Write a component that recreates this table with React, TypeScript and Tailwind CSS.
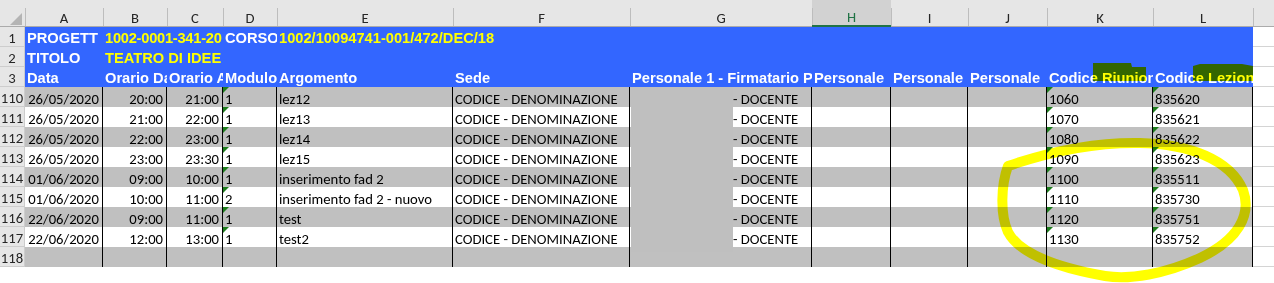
import type { ReactNode } from 'react'

const COLS = ['A', 'B', 'C', 'D', 'E', 'F', 'G', 'H', 'I', 'J', 'K', 'L'] as const
type Col = (typeof COLS)[number]

const W: Record<Col, string> = {
  A: 'w-[78px]',
  B: 'w-[64px]',
  C: 'w-[56px]',
  D: 'w-[54px]',
  E: 'w-[176px]',
  F: 'w-[177px]',
  G: 'w-[182px]',
  H: 'w-[79px]',
  I: 'w-[77px]',
  J: 'w-[79px]',
  K: 'w-[106px]',
  L: 'w-[100px]',
}

interface Riga {
  n: number
  data: string
  dalle: string
  alle: string
  modulo: string
  argomento: string
  riunione: string
  lezione: string
}

const RIGHE: Riga[] = [
  { n: 110, data: '26/05/2020', dalle: '20:00', alle: '21:00', modulo: '1', argomento: 'lez12', riunione: '1060', lezione: '835620' },
  { n: 111, data: '26/05/2020', dalle: '21:00', alle: '22:00', modulo: '1', argomento: 'lez13', riunione: '1070', lezione: '835621' },
  { n: 112, data: '26/05/2020', dalle: '22:00', alle: '23:00', modulo: '1', argomento: 'lez14', riunione: '1080', lezione: '835622' },
  { n: 113, data: '26/05/2020', dalle: '23:00', alle: '23:30', modulo: '1', argomento: 'lez15', riunione: '1090', lezione: '835623' },
  { n: 114, data: '01/06/2020', dalle: '09:00', alle: '10:00', modulo: '1', argomento: 'inserimento fad 2', riunione: '1100', lezione: '835511' },
  { n: 115, data: '01/06/2020', dalle: '10:00', alle: '11:00', modulo: '2', argomento: 'inserimento fad 2 - nuovo', riunione: '1110', lezione: '835730' },
  { n: 116, data: '22/06/2020', dalle: '09:00', alle: '11:00', modulo: '1', argomento: 'test', riunione: '1120', lezione: '835751' },
  { n: 117, data: '22/06/2020', dalle: '12:00', alle: '13:00', modulo: '1', argomento: 'test2', riunione: '1130', lezione: '835752' },
]

function RowHead({ n }: { n: number }) {
  return (
    <div className="w-[25px] shrink-0 flex items-end justify-center bg-[#e6e6e6] border-b border-r border-[#cdcdcd] leading-[15px] text-[#262626]">
      {n}
    </div>
  )
}

function ColumnHeader() {
  return (
    <div className="flex h-[27px] bg-[#e6e6e6] font-['Carlito','Calibri','Lato',sans-serif] text-[14.67px]">
      <div className="relative w-[25px] shrink-0 border-b border-[#ababab]">
        <svg className="absolute left-0 top-0" width="25" height="26">
          <polygon points="22,13 22,25 10,25" fill="#b4b4b4" />
        </svg>
      </div>
      {COLS.map((c) => (
        <div
          key={c}
          className={`${W[c]} shrink-0 relative flex items-end justify-center leading-[15px] before:absolute before:left-0 before:top-[8px] before:bottom-0 before:w-px before:bg-[#bdbdbd] ${
            c === 'H' ? 'bg-[#d2d2d2] text-[#217346] border-b-2 border-[#217346]' : 'text-[#262626] border-b border-[#ababab]'
          }`}
        >
          {c}
        </div>
      ))}
      <div className="flex-1 relative border-b border-[#ababab] before:absolute before:left-0 before:top-[8px] before:bottom-0 before:w-px before:bg-[#bdbdbd]" />
    </div>
  )
}

function HCell({
  w,
  children,
  clip = true,
  yellow = false,
  className = '',
}: {
  w: string
  children?: ReactNode
  clip?: boolean
  yellow?: boolean
  className?: string
}) {
  return (
    <div
      className={`${w} shrink-0 flex items-end pl-[2px] leading-[17px] whitespace-nowrap ${clip ? 'overflow-hidden' : 'overflow-visible'} ${
        yellow ? 'text-[#ffff00]' : 'text-white'
      } ${className}`}
    >
      {children}
    </div>
  )
}

function BlueRow({ n, children }: { n: number; children: ReactNode }) {
  return (
    <div className="flex h-[20px]">
      <RowHead n={n} />
      <div className="flex w-[1228px] shrink-0 bg-[#3366ff] font-bold font-['Liberation_Sans',Arial,sans-serif] text-[14.67px]">
        {children}
      </div>
      <div className="flex-1 border-b border-[#d4d4d4]" />
    </div>
  )
}

function DCell({
  w,
  children,
  align = 'left',
  flag = false,
  className = '',
}: {
  w: string
  children?: ReactNode
  align?: 'left' | 'center' | 'right'
  flag?: boolean
  className?: string
}) {
  const just = align === 'center' ? 'justify-center' : align === 'right' ? 'justify-end pr-[3px]' : 'justify-start pl-[2px]'
  return (
    <div className={`${w} shrink-0 relative flex items-end ${just} leading-[15px] whitespace-nowrap overflow-hidden border-r border-black ${className}`}>
      {flag && <span className="absolute left-0 top-0 w-0 h-0 border-t-[6px] border-r-[6px] border-t-[#1e7d1e] border-r-transparent" />}
      {children}
    </div>
  )
}

function DataRow({ riga, n, grey }: { riga?: Riga; n: number; grey: boolean }) {
  return (
    <div className="flex h-[20px]">
      <RowHead n={n} />
      <div className={`flex w-[1228px] shrink-0 ${grey ? 'bg-[#c0c0c0]' : 'bg-white'} text-black`}>
        <DCell w={W.A} align="center">{riga?.data}</DCell>
        <DCell w={W.B} align="right">{riga?.dalle}</DCell>
        <DCell w={W.C} align="right">{riga?.alle}</DCell>
        <DCell w={W.D} flag={!!riga}>{riga?.modulo}</DCell>
        <DCell w={W.E}>{riga?.argomento}</DCell>
        <DCell w={W.F}>{riga && 'CODICE - DENOMINAZIONE'}</DCell>
        <DCell w={W.G} className="pl-[103px]">{riga && '- DOCENTE'}</DCell>
        <DCell w={W.H} />
        <DCell w={W.I} />
        <DCell w={W.J} />
        <DCell w={W.K} flag={!!riga}>{riga?.riunione}</DCell>
        <DCell w={W.L} flag={!!riga}>{riga?.lezione}</DCell>
      </div>
      <div className="flex-1 border-b border-[#d4d4d4]" />
    </div>
  )
}

export default function App() {
  return (
    <div className="relative w-[1274px] h-[283px] overflow-hidden bg-white font-['Carlito','Calibri','Lato',sans-serif] text-[14.67px]">
      <ColumnHeader />

      <BlueRow n={1}>
        <HCell w={W.A}>PROGETT</HCell>
        <HCell w="w-[120px]" yellow className="tracking-[-0.25px]">1002-0001-341-20</HCell>
        <HCell w={W.D}>CORSO</HCell>
        <HCell w={W.E} yellow clip={false}>1002/10094741-001/472/DEC/18</HCell>
      </BlueRow>
      <BlueRow n={2}>
        <HCell w={W.A}>TITOLO</HCell>
        <HCell w={W.B} yellow clip={false}>TEATRO DI IDEE</HCell>
      </BlueRow>
      <BlueRow n={3}>
        <HCell w={W.A}>Data</HCell>
        <HCell w={W.B}>Orario Dalle</HCell>
        <HCell w={W.C}>Orario Alle</HCell>
        <HCell w={W.D}>Modulo</HCell>
        <HCell w={W.E}>Argomento</HCell>
        <HCell w={W.F}>Sede</HCell>
        <HCell w={W.G}>Personale 1 - Firmatario Presenze</HCell>
        <HCell w={W.H}>Personale</HCell>
        <HCell w={W.I}>Personale</HCell>
        <HCell w={W.J}>Personale</HCell>
        <HCell w={W.K}>Codice Riunione</HCell>
        <HCell w={W.L}>Codice Lezione</HCell>
      </BlueRow>

      {RIGHE.map((r, i) => (
        <DataRow key={r.n} riga={r} n={r.n} grey={i % 2 === 0} />
      ))}
      <DataRow n={118} grey />

      {/* nominativo oscurato */}
      <div className="absolute left-[631px] top-[87px] w-[102px] h-[165px] bg-[#bfbfbf]" />

      {/* evidenziatore giallo */}
      <svg className="absolute left-0 top-0 pointer-events-none mix-blend-multiply" width="1274" height="283">
        <polygon points="1093,63 1131,63 1132,67 1146,67 1146,81 1093,81" fill="#ffff00" />
        <polygon points="1193,66 1200,64 1242,64 1253,66 1253,81 1193,81" fill="#ffff00" />
        <path
          d="M1008,166 C1040,155 1090,142 1140,143 C1190,144 1230,160 1243,190 C1252,215 1238,240 1200,258 C1165,274 1130,280 1105,276 C1060,268 1020,255 1008,232 C1000,215 1001,185 1008,166 Z"
          fill="none"
          stroke="#ffff00"
          strokeWidth="10"
          strokeLinejoin="round"
        />
      </svg>
    </div>
  )
}
